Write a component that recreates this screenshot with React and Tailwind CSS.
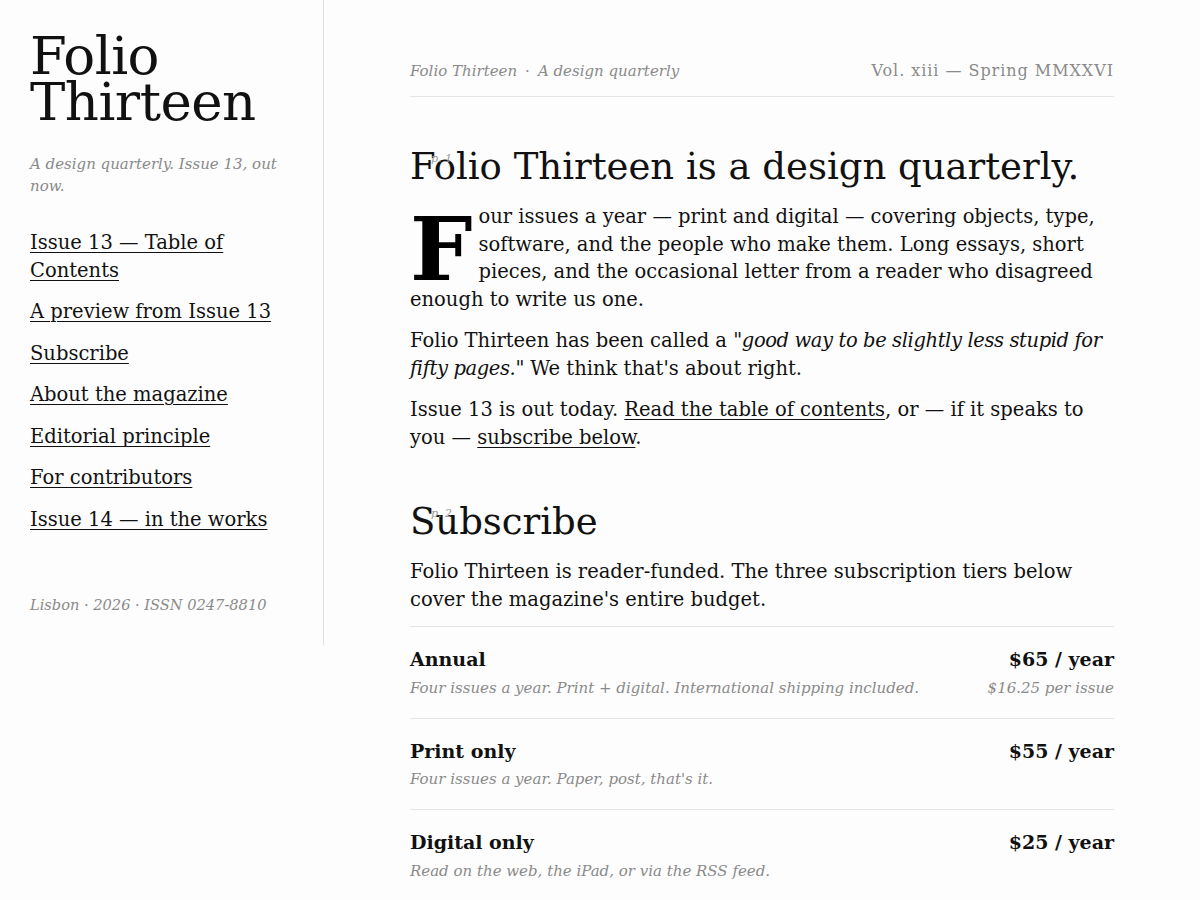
const navItems = [
  "Issue 13 — Table of Contents",
  "A preview from Issue 13",
  "Subscribe",
  "About the magazine",
  "Editorial principle",
  "For contributors",
  "Issue 14 — in the works",
];

const tiers = [
  {
    name: "Annual",
    desc: "Four issues a year. Print + digital. International shipping included.",
    price: "$65 / year",
    per: "$16.25 per issue",
  },
  {
    name: "Print only",
    desc: "Four issues a year. Paper, post, that's it.",
    price: "$55 / year",
  },
  {
    name: "Digital only",
    desc: "Read on the web, the iPad, or via the RSS feed.",
    price: "$25 / year",
  },
];

const linkCls = "underline decoration-1 underline-offset-[3px]";

const App = () => {
  return (
    <div className="min-h-screen bg-[#fdfdfd] text-[#111] font-['DejaVu_Serif',serif] flex items-start">
      {/* Sidebar */}
      <aside className="w-[324px] shrink-0 border-r border-[#e2e2e2] pl-[30px] pr-[30px] pt-[33px] pb-[29px]">
        <h1 className="text-[53px] leading-[46px] font-normal tracking-[-0.01em]">
          Folio
          <br />
          Thirteen
        </h1>
        <p className="mt-[28px] text-[15px] leading-[22px] italic text-[#8a8a8a]">
          A design quarterly. Issue 13, out now.
        </p>

        <nav className="mt-[32px] flex flex-col gap-[14px] text-[19.5px] leading-[27.5px]">
          {navItems.map((item) => (
            <a key={item} href="#" className={linkCls}>
              {item}
            </a>
          ))}
        </nav>

        <p className="mt-[61px] text-[14.6px] leading-[22px] italic text-[#8a8a8a]">
          Lisbon · 2026 · ISSN 0247-8810
        </p>
      </aside>

      {/* Main */}
      <main className="flex-1 px-[86px] pt-[60px]">
        <div className="max-w-[704px] mx-auto">
          <header className="flex items-baseline justify-between border-b border-[#e5e5e5] pb-[14px]">
            <p className="text-[15px] leading-[22px] italic text-[#8a8a8a]">
              Folio Thirteen<span className="mx-[8px]">·</span>A design quarterly
            </p>
            <p className="text-[16px] leading-[22px] tracking-[0.06em] text-[#8a8a8a]">
              Vol. xiii — Spring MMXXVI
            </p>
          </header>

          {/* Intro */}
          <section className="mt-[48px]">
            <h2 className="relative text-[37px] leading-[44px] font-normal">
              <span className="absolute left-[21px] top-[8px] text-[11px] leading-none italic text-[#999]">
                p. 1
              </span>
              Folio Thirteen is a design quarterly.
            </h2>
            <div className="mt-[14px] flex flex-col gap-[14px] text-[19.5px] leading-[27.5px]">
              <p>
                <span className="float-left font-bold text-[88px] leading-[66px] mt-[13px] mr-[6px] text-black">
                  F
                </span>
                our issues a year — print and digital — covering objects, type, software, and
                the people who make them. Long essays, short pieces, and the occasional letter
                from a reader who disagreed enough to write us one.
              </p>
              <p>
                Folio Thirteen has been called a{" "}
                <em className="tracking-[-0.02em]">
                  "good way to be slightly less stupid for fifty pages."
                </em>{" "}
                We think that's about right.
              </p>
              <p>
                Issue 13 is out today.{" "}
                <a href="#" className={linkCls}>
                  Read the table of contents
                </a>
                , or — if it speaks to you —{" "}
                <a href="#" className={linkCls}>
                  subscribe below
                </a>
                .
              </p>
            </div>
          </section>

          {/* Subscribe */}
          <section className="mt-[49px]">
            <h2 className="relative text-[37px] leading-[44px] font-normal">
              <span className="absolute left-[21px] top-[8px] text-[11px] leading-none italic text-[#999]">
                p. 2
              </span>
              Subscribe
            </h2>
            <p className="mt-[14px] mb-[13px] text-[19.5px] leading-[27.5px]">
              Folio Thirteen is reader-funded. The three subscription tiers below cover the
              magazine's entire budget.
            </p>

            <ul>
              {tiers.map((t) => (
                <li
                  key={t.name}
                  className="flex justify-between gap-6 border-t border-[#e5e5e5] py-[19px]"
                >
                  <div>
                    <div className="text-[19px] leading-[27.5px] font-bold">{t.name}</div>
                    <div className="mt-[3px] text-[15px] leading-[22px] italic text-[#8a8a8a]">
                      {t.desc}
                    </div>
                  </div>
                  <div className="text-right shrink-0">
                    <div className="text-[19px] leading-[27.5px] font-bold">{t.price}</div>
                    {t.per && (
                      <div className="mt-[3px] text-[15px] leading-[22px] italic text-[#8a8a8a]">
                        {t.per}
                      </div>
                    )}
                  </div>
                </li>
              ))}
            </ul>
          </section>
        </div>
      </main>
    </div>
  );
};

export default App;
